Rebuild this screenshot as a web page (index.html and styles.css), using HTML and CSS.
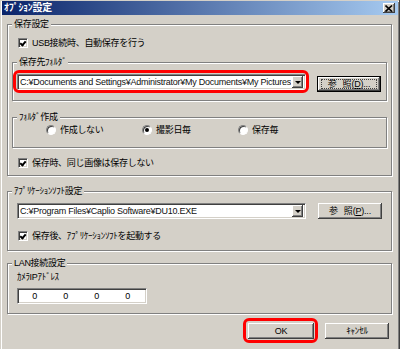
FILE: index.html
```html
<!DOCTYPE html>
<html lang="ja">

<head>
    <meta charset="UTF-8">
    <meta name="viewport" content="width=device-width, initial-scale=1.0">
    <title>ｵﾌﾟｼｮﾝ設定</title>
    <link rel="stylesheet" href="styles.css">
</head>

<body>
    <div class="window">
        <div class="titlebar">
            <span class="title">ｵﾌﾟｼｮﾝ設定</span>
            <span class="close-btn">
                <svg width="8" height="7" viewBox="0 0 8 7">
                    <path d="M0.5 0.5 L7 6.5 M7 0.5 L0.5 6.5" stroke="#000" stroke-width="1.6" fill="none" />
                </svg>
            </span>
        </div>

        <div class="content">
            <!-- 保存設定 -->
            <div class="group group-save">
                <div class="group-title">保存設定</div>
                <div class="check-row row-usb">
                    <span class="checkbox checked"></span>
                    <span>USB接続時、自動保存を行う</span>
                </div>

                <div class="group inner group-folder">
                    <div class="group-title">保存先ﾌｫﾙﾀﾞ</div>
                    <div class="path-row">
                        <div class="combo highlight">
                            <span class="combo-text">C:¥Documents and Settings¥Administrator¥My Documents¥My Pictures</span>
                            <span class="arrow-btn"><span class="arrow"></span></span>
                        </div>
                        <button class="btn btn-default">参<span class="gap"></span>照(<u>D</u>)...</button>
                    </div>
                </div>

                <div class="group inner group-make">
                    <div class="group-title">ﾌｫﾙﾀﾞ作成</div>
                    <div class="radios">
                        <div class="radio-item"><span class="radio"></span>作成しない</div>
                        <div class="radio-item"><span class="radio selected"></span>撮影日毎</div>
                        <div class="radio-item"><span class="radio"></span>保存毎</div>
                    </div>
                </div>

                <div class="check-row row-same">
                    <span class="checkbox checked"></span>
                    <span>保存時、同じ画像は保存しない</span>
                </div>
            </div>

            <!-- ｱﾌﾟﾘｹｰｼｮﾝｿﾌﾄ設定 -->
            <div class="group group-app">
                <div class="group-title">ｱﾌﾟﾘｹｰｼｮﾝｿﾌﾄ設定</div>
                <div class="path-row app-row">
                    <div class="combo">
                        <span class="combo-text">C:¥Program Files¥Caplio Software¥DU10.EXE</span>
                        <span class="arrow-btn"><span class="arrow"></span></span>
                    </div>
                    <button class="btn">参<span class="gap"></span>照(<u>P</u>)...</button>
                </div>
                <div class="check-row row-launch">
                    <span class="checkbox checked"></span>
                    <span>保存後、ｱﾌﾟﾘｹｰｼｮﾝｿﾌﾄを起動する</span>
                </div>
            </div>

            <!-- LAN接続設定 -->
            <div class="group group-lan">
                <div class="group-title">LAN接続設定</div>
                <div class="lan-label">ｶﾒﾗIPｱﾄﾞﾚｽ</div>
                <div class="ip-field">
                    <span class="ip-cell">0</span>
                    <span class="ip-cell">0</span>
                    <span class="ip-cell">0</span>
                    <span class="ip-cell">0</span>
                </div>
            </div>

            <div class="footer">
                <button class="btn btn-ok highlight">OK</button>
                <button class="btn">ｷｬﾝｾﾙ</button>
            </div>
        </div>
    </div>
</body>

</html>
```

FILE: styles.css
```css
body {
    margin: 0;
    padding: 0;
    background: #D4D0C8;
    font-family: "Liberation Sans", "Noto Sans CJK JP", sans-serif;
    font-size: 9px;
    letter-spacing: -0.3px;
    color: #000;
}

.window {
    box-sizing: border-box;
    width: 400px;
    height: 349px;
    overflow: hidden;
    background: #D4D0C8;
    box-shadow: inset -1px 0 #404040, inset 1px 1px #D4D0C8, inset 2px 2px #FFF, inset -2px 0 #808080;
}

/* title bar */
.titlebar {
    height: 14px;
    margin: 1px 2px 0 2px;
    display: flex;
    align-items: center;
    justify-content: space-between;
    background: linear-gradient(to right, #0A246A, #A6CAF0);
}

.title {
    color: #FFF;
    font-weight: bold;
    font-size: 10px;
    line-height: 14px;
    padding-left: 2px;
}

.close-btn {
    box-sizing: border-box;
    width: 12px;
    height: 10px;
    margin-right: 3px;
    display: flex;
    justify-content: center;
    align-items: center;
    background: #D4D0C8;
    box-shadow: inset -1px -1px #404040, inset 1px 1px #FFF, inset -2px -2px #808080;
}

.content {
    padding: 0 7px 0 7px;
}

/* group boxes */
.group {
    --pad: 0px;
    box-sizing: border-box;
    border: 1px solid #808080;
    box-shadow: inset 1px 1px 0 #FFF, 1px 1px 0 #FFF;
    width: 385px;
    padding: 0 var(--pad);
}

.group-title {
    width: fit-content;
    height: 12px;
    line-height: 12px;
    margin-top: -7px;
    margin-left: calc(4px - var(--pad));
    padding: 0 2px;
    background: #D4D0C8;
}

.group-save {
    --pad: 4px;
    margin-top: 9px;
    height: 152px;
}

.group.inner {
    width: 375px;
}

.group-folder {
    --pad: 4px;
    margin-top: 13px;
    height: 39px;
    padding-right: 5px;
}

.group-make {
    margin-top: 16px;
    height: 31px;
}

.group-app {
    --pad: 9px;
    margin-top: 15px;
    height: 60px;
}

.group-lan {
    --pad: 9px;
    margin-top: 12px;
    height: 51px;
}

/* checkboxes */
.check-row {
    display: flex;
    align-items: center;
    gap: 4px;
    height: 12px;
    line-height: 12px;
    padding-left: 6px;
}

.row-usb {
    margin-top: 7px;
}

.row-same {
    margin-top: 9px;
}

.group-app .check-row {
    margin-top: 11px;
    padding-left: 1px;
}

.checkbox {
    box-sizing: border-box;
    width: 10px;
    height: 10px;
    background: #FFF;
    border: 1px solid;
    border-color: #808080 #FFF #FFF #808080;
    box-shadow: inset 1px 1px #404040, inset -1px -1px #D4D0C8;
    position: relative;
}

.checkbox.checked::after {
    content: "";
    position: absolute;
    left: 2px;
    top: 1px;
    width: 2px;
    height: 4px;
    border: solid #000;
    border-width: 0 2px 2px 0;
    transform: rotate(40deg);
    transform-origin: center;
}

/* path rows */
.path-row {
    display: flex;
    align-items: flex-start;
    justify-content: space-between;
    margin-top: 6px;
}

.combo {
    box-sizing: border-box;
    position: relative;
    width: 289px;
    height: 16px;
    display: flex;
    align-items: center;
    justify-content: space-between;
    background: #FFF;
    border: 1px solid;
    border-color: #808080 #FFF #FFF #808080;
    box-shadow: inset 1px 1px #404040, inset -1px -1px #D4D0C8;
    padding: 0 2px 0 2px;
}

.combo-text {
    font-size: 9px;
    white-space: nowrap;
    overflow: hidden;
    letter-spacing: -0.25px;
    color: #111;
}

.arrow-btn {
    box-sizing: border-box;
    flex: none;
    width: 11px;
    height: 12px;
    display: flex;
    justify-content: center;
    align-items: center;
    background: #D4D0C8;
    box-shadow: inset -1px -1px #404040, inset 1px 1px #FFF, inset -2px -2px #808080;
}

.arrow {
    width: 0;
    height: 0;
    border-left: 3px solid transparent;
    border-right: 3px solid transparent;
    border-top: 3px solid #000;
}

/* buttons */
.btn {
    box-sizing: border-box;
    width: 64px;
    height: 16px;
    padding: 0;
    margin: 0;
    border: none;
    font-family: "Liberation Sans", "Noto Sans CJK JP", sans-serif;
    font-size: 9px;
    letter-spacing: -0.2px;
    line-height: 16px;
    color: #000;
    background: #D4D0C8;
    box-shadow: inset -1px -1px #404040, inset 1px 1px #FFF, inset -2px -2px #808080;
    position: relative;
}

.btn .gap {
    display: inline-block;
    width: 6px;
}

.group-folder .btn {
    margin-top: 2px;
}

.btn-default {
    box-shadow: inset 0 0 0 1px #000, inset -2px -2px #404040, inset 2px 2px #FFF, inset -3px -3px #808080;
}

.btn-default::before {
    content: "";
    position: absolute;
    inset: 3px 4px 3px 4px;
    border: 1px dotted #404040;
}

/* radios */
.radios {
    display: flex;
    padding-left: 33px;
    margin-top: 1px;
}

.radio-item {
    width: 96px;
    display: flex;
    align-items: center;
    gap: 4px;
    height: 12px;
    line-height: 12px;
}

.radio {
    box-sizing: border-box;
    width: 10px;
    height: 10px;
    border-radius: 50%;
    background: #FFF;
    border: 1px solid;
    border-color: #808080 #FFF #FFF #808080;
    box-shadow: inset 1px 1px #404040;
    position: relative;
}

.radio.selected::after {
    content: "";
    position: absolute;
    left: 2px;
    top: 2px;
    width: 4px;
    height: 4px;
    border-radius: 50%;
    background: #000;
}

/* LAN */
.lan-label {
    margin-top: 2px;
    height: 12px;
    line-height: 12px;
}

.ip-field {
    box-sizing: border-box;
    width: 130px;
    height: 16px;
    margin-top: 5px;
    display: flex;
    background: #FFF;
    border: 1px solid;
    border-color: #808080 #FFF #FFF #808080;
    box-shadow: inset 1px 1px #404040, inset -1px -1px #D4D0C8;
    padding-left: 1px;
}

.ip-cell {
    width: 31px;
    text-align: center;
    line-height: 14px;
}

/* footer */
.footer {
    display: flex;
    justify-content: flex-end;
    gap: 11px;
    margin-top: 9px;
    padding-right: 4px;
}

.btn-ok {
    width: 66px;
}

/* red marks */
.highlight::after {
    content: "";
    position: absolute;
    top: -5px;
    left: -5px;
    right: -4px;
    bottom: -4px;
    border: 3px solid #F00;
    border-radius: 6px;
}
```
